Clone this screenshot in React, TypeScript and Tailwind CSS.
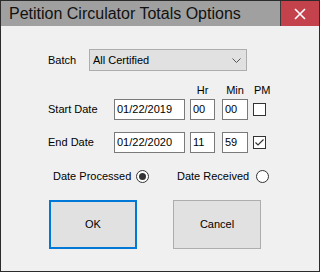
import React from "react";

const F = { fontFamily: '"Liberation Sans", Arial, sans-serif' };

function TextBox({ w, value }: { w: number; value: string }) {
  return (
    <div
      className="h-[21px] bg-white border border-[#7a7a7a] flex items-center pl-[2px] text-[11px] text-black"
      style={{ width: w }}
    >
      {value}
    </div>
  );
}

function Check({ checked }: { checked?: boolean }) {
  return (
    <div className="w-[13px] h-[13px] bg-white border border-[#333333] flex items-center justify-center">
      {checked && (
        <svg width="11" height="11" viewBox="0 0 11 11">
          <path d="M1.5 5.5 L4 8 L9.5 2.5" fill="none" stroke="#333333" strokeWidth="1.2" />
        </svg>
      )}
    </div>
  );
}

function Radio({ on }: { on?: boolean }) {
  return (
    <div className="w-[13px] h-[13px] rounded-full bg-white border border-[#333333] flex items-center justify-center">
      {on && <div className="w-[7px] h-[7px] rounded-full bg-[#333333]" />}
    </div>
  );
}

export default function App() {
  return (
    <div className="w-[320px] h-[273px] bg-white">
      <div
        className="w-[320px] h-[272px] border border-[#2b2b2b] bg-[#f0f0f0] flex flex-col text-black"
        style={F}
      >
        {/* Title bar */}
        <div className="h-[25px] bg-[#a0a0a0] flex items-stretch shrink-0">
          <div className="flex-1 pl-[8px] flex items-center text-[16px] text-[#111] leading-none">
            Petition Circulator Totals Options
          </div>
          <div className="w-[39px] bg-[#c4424b] border-l border-[#3a3a3a] flex items-center justify-center">
            <svg width="12" height="12" viewBox="0 0 12 12">
              <path d="M1 1 L11 11 M11 1 L1 11" stroke="#ffffff" strokeWidth="1.6" />
            </svg>
          </div>
        </div>

        {/* Body */}
        <div className="flex flex-col pl-[47px] text-[11px]">
          {/* Batch */}
          <div className="flex items-center mt-[23px] h-[22px]">
            <div className="w-[41px]">Batch</div>
            <div className="w-[158px] h-[22px] bg-[#e1e1e1] border border-[#adadad] flex items-center justify-between pl-[3px] pr-[5px]">
              <span>All Certified</span>
              <svg width="9" height="5" viewBox="0 0 9 5">
                <path d="M0.5 0.5 L4.5 4.5 L8.5 0.5" fill="none" stroke="#555555" strokeWidth="1" />
              </svg>
            </div>
          </div>

          {/* Header */}
          <div className="flex items-end h-[17px] mt-[10px]">
            <div className="w-[142px]" />
            <div className="w-[25px] text-center">Hr</div>
            <div className="w-[7px]" />
            <div className="w-[26px] text-center">Min</div>
            <div className="w-[6px]" />
            <div>PM</div>
          </div>

          {/* Start Date */}
          <div className="flex items-center mt-[1px]">
            <div className="w-[66px]">Start Date</div>
            <TextBox w={71} value="01/22/2019" />
            <div className="w-[5px]" />
            <TextBox w={25} value="00" />
            <div className="w-[7px]" />
            <TextBox w={26} value="00" />
            <div className="w-[5px]" />
            <Check />
          </div>

          {/* End Date */}
          <div className="flex items-center mt-[12px]">
            <div className="w-[66px]">End Date</div>
            <TextBox w={71} value="01/22/2020" />
            <div className="w-[5px]" />
            <TextBox w={25} value="11" />
            <div className="w-[7px]" />
            <TextBox w={26} value="59" />
            <div className="w-[5px]" />
            <Check checked />
          </div>

          {/* Radios */}
          <div className="flex items-center mt-[17px] h-[13px] pl-[5px]">
            <span className="w-[83px]">Date Processed</span>
            <Radio on />
            <span className="ml-[28px] w-[79px]">Date Received</span>
            <Radio />
          </div>

          {/* Buttons */}
          <div className="flex mt-[17px] pl-[1px] text-[11px]">
            <div className="w-[88px] h-[49px] bg-[#e1e1e1] border-2 border-[#0078d7] flex items-center justify-center">
              OK
            </div>
            <div className="w-[36px]" />
            <div className="w-[88px] h-[49px] bg-[#e1e1e1] border border-[#adadad] flex items-center justify-center">
              Cancel
            </div>
          </div>
        </div>
      </div>
    </div>
  );
}
